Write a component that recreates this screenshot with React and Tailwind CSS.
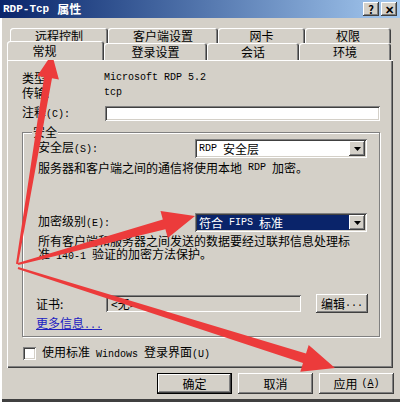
import React from "react";

const raised =
  "shadow-[inset_-1px_-1px_#404040,inset_1px_1px_#ffffff,inset_-2px_-2px_#808080,inset_2px_2px_#d4d0c8]";
const sunken =
  "shadow-[inset_1px_1px_#808080,inset_-1px_-1px_#ffffff,inset_2px_2px_#404040,inset_-2px_-2px_#d4d0c8]";

function M({ children, className = "" }) {
  return (
    <span className={"font-['Liberation_Mono',monospace] text-[10px] " + className}>
      {children}
    </span>
  );
}

function Tab({ label, w, active }) {
  return (
    <div
      style={{ width: w }}
      className={
        active
          ? "relative z-10 h-[19px] -mt-[2px] -mb-[2px] pr-[22px] flex items-center justify-center bg-[#d4d0c8] rounded-t-[3px] shadow-[inset_1px_1px_#ffffff,inset_-1px_0_#404040,inset_-2px_0_#808080]"
          : "h-full flex items-center justify-center bg-[#d4d0c8] rounded-t-[3px] shadow-[inset_1px_1px_#ffffff,inset_-1px_0_#404040,inset_-2px_0_#808080]"
      }
    >
      {label}
    </div>
  );
}

function Arrow({ x0, y0, x1, y1, w0, w1, L, H }) {
  const dx = x1 - x0;
  const dy = y1 - y0;
  const len = Math.hypot(dx, dy);
  const ux = dx / len;
  const uy = dy / len;
  const nx = -uy;
  const ny = ux;
  const bx = x1 - ux * L;
  const by = y1 - uy * L;
  const pts = [
    [x0 + (nx * w0) / 2, y0 + (ny * w0) / 2],
    [bx + (nx * w1) / 2, by + (ny * w1) / 2],
    [bx + (nx * H) / 2, by + (ny * H) / 2],
    [x1, y1],
    [bx - (nx * H) / 2, by - (ny * H) / 2],
    [bx - (nx * w1) / 2, by - (ny * w1) / 2],
    [x0 - (nx * w0) / 2, y0 - (ny * w0) / 2],
  ];
  return (
    <polygon
      points={pts.map((p) => p.map((v) => v.toFixed(1)).join(",")).join(" ")}
      fill="#ec3b3b"
    />
  );
}

function DownArrow() {
  return (
    <svg width="7" height="4" viewBox="0 0 7 4">
      <polygon points="0,0 7,0 3.5,4" fill="#000" />
    </svg>
  );
}

function Combo({ children, selected }) {
  return (
    <div className={"w-[172px] h-[19px] bg-white flex items-center p-[2px] " + sunken}>
      <div
        className={
          selected
            ? "flex-1 h-full flex items-center pl-[2px] bg-[#0a246a] text-white"
            : "flex-1 h-full flex items-center pl-[2px]"
        }
      >
        {children}
      </div>
      <div className={"w-[16px] h-full flex items-center justify-center bg-[#d4d0c8] " + raised}>
        <DownArrow />
      </div>
    </div>
  );
}

export default function App() {
  return (
    <div className="relative w-[400px] h-[402px] overflow-hidden bg-[#d4d0c8] text-black font-['Noto_Sans_CJK_SC',sans-serif] text-[12px] leading-[14px] flex flex-col shadow-[inset_2px_0_#ffffff,inset_0_-3px_#404040]">
      {/* Title bar */}
      <div className="h-[18px] flex items-center justify-between pl-[3px] pr-[3px] bg-gradient-to-r from-[#0a246a] to-[#a6caf0]">
        <div className="text-white font-bold flex items-center">
          <span className="font-['Liberation_Mono',monospace] text-[11px]">RDP-Tcp</span>
          <span className="ml-[8px]">属性</span>
        </div>
        <div className="flex gap-[2px]">
          <div className={"w-[16px] h-[14px] bg-[#d4d0c8] flex items-center justify-center font-bold text-[11px] " + raised}>
            ?
          </div>
          <div className={"w-[16px] h-[14px] bg-[#d4d0c8] flex items-center justify-center font-bold text-[11px] " + raised}>
            ✕
          </div>
        </div>
      </div>

      {/* Tabs */}
      <div className="mt-[10px] h-[15px] flex pl-[10px]">
        <Tab label="远程控制" w={98} />
        <Tab label="客户端设置" w={110} />
        <Tab label="网卡" w={87} />
        <Tab label="权限" w={86} />
      </div>
      <div className="h-[17px] flex pl-[7px]">
        <Tab label="常规" w={97} active />
        <Tab label="登录设置" w={103} />
        <Tab label="会话" w={92} />
        <Tab label="环境" w={92} />
      </div>

      {/* Panel */}
      <div className="ml-[7px] w-[386px] h-[308px] flex flex-col pt-[10px] pl-[15px] shadow-[inset_1px_1px_#ffffff,inset_-1px_-1px_#404040,inset_-2px_-2px_#808080]">
        <div className="h-[15px] flex items-center">
          <span className="w-[82px]">类型:</span>
          <M>Microsoft RDP 5.2</M>
        </div>
        <div className="h-[15px] flex items-center">
          <span className="w-[82px]">传输:</span>
          <M>tcp</M>
        </div>
        <div className="mt-[6px] h-[15px] flex items-center">
          <span className="w-[83px]">
            注释<M>(C):</M>
          </span>
          <div className={"w-[275px] h-[15px] bg-white " + sunken} />
        </div>

        {/* Group */}
        <div className="relative mt-[11px] w-[358px] h-[205px] border border-[#808080] shadow-[1px_1px_0_#ffffff,inset_1px_1px_0_#ffffff] flex flex-col pt-[6px] pl-[15px]">
          <span className="absolute -top-[8px] left-[9px] px-[1px] bg-[#d4d0c8]">安全</span>
          <div className="h-[19px] flex items-center">
            <span className="w-[157px]">
              安全层<M>(S):</M>
            </span>
            <Combo>
              <M>RDP</M>
              <span className="ml-[6px]">安全层</span>
            </Combo>
          </div>
          <div className="mt-[3px] h-[14px] flex items-center">
            服务器和客户端之间的通信将使用本地<M className="mx-[6px]">RDP</M>加密。
          </div>
          <div className="mt-[38px] h-[19px] flex items-center">
            <span className="w-[157px]">
              加密级别<M>(E):</M>
            </span>
            <Combo selected>
              符合<M className="mx-[6px]">FIPS</M>标准
            </Combo>
          </div>
          <div className="mt-[2px] leading-[13px]">
            <div className="h-[13px]">所有客户端和服务器之间发送的数据要经过联邦信息处理标</div>
            <div className="h-[13px]">
              准<M className="mx-[6px]">140-1</M>验证的加密方法保护。
            </div>
          </div>
          <div className="mt-[34px] h-[19px] flex items-center">
            <span className="w-[68px] -ml-[2px] mr-[2px]">证书:</span>
            <div className={"w-[195px] h-[17px] bg-[#d4d0c8] flex items-center pl-[5px] " + sunken}>
              <span>&lt;无&gt;</span>
            </div>
            <div className={"ml-[15px] w-[52px] h-[19px] flex items-center justify-center " + raised}>
              编辑<M>...</M>
            </div>
          </div>
          <div className="mt-[4px] h-[14px] -ml-[2px] flex items-center">
            <span className="text-[#2020c0] underline">
              更多信息<M>...</M>
            </span>
          </div>
        </div>

        <div className="mt-[10px] h-[13px] flex items-center">
          <div className={"w-[13px] h-[13px] bg-white ml-[1px] " + sunken} />
          <span className="ml-[6px]">
            使用标准<M className="mx-[6px]">Windows</M>登录界面<M>(U)</M>
          </span>
        </div>
      </div>

      {/* Buttons */}
      <div className="mt-[5px] flex justify-end gap-[6px] pr-[6px]">
        <div className="w-[75px] h-[21px] flex items-center justify-center shadow-[inset_0_0_0_1px_#000000,inset_-2px_-2px_#404040,inset_2px_2px_#ffffff,inset_-3px_-3px_#808080]">
          确定
        </div>
        <div className={"w-[75px] h-[21px] flex items-center justify-center " + raised}>取消</div>
        <div className={"w-[75px] h-[21px] flex items-center justify-center " + raised}>
          应用<M className="ml-[4px]">
            (<span className="underline">A</span>)
          </M>
        </div>
      </div>

      {/* Red annotation arrows */}
      <svg className="absolute top-0 left-0 pointer-events-none" width="400" height="402" viewBox="0 0 400 402">
        <Arrow x0={17} y0={264} x1={52} y1={54} w0={2} w1={8} L={24} H={22} />
        <Arrow x0={18} y0={264} x1={195} y1={216} w0={2} w1={10} L={32} H={28} />
        <Arrow x0={18} y0={268} x1={335} y1={368} w0={2} w1={10} L={32} H={28} />
      </svg>
    </div>
  );
}
